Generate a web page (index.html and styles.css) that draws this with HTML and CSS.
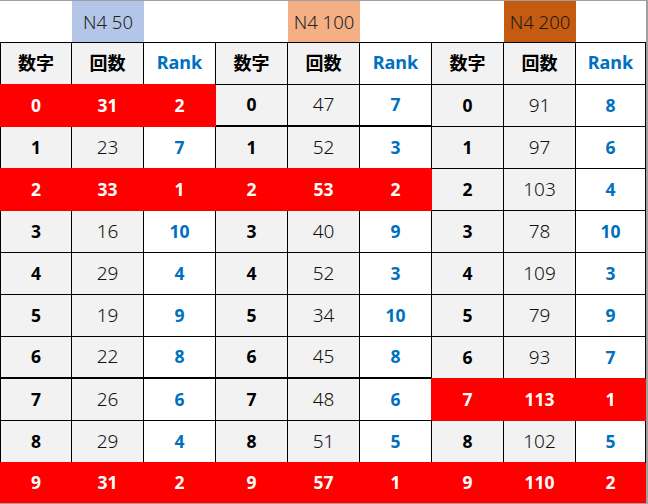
FILE: index.html
```html
<!DOCTYPE html>
<html lang="ja">
<head>
<meta charset="utf-8">
<title>N4</title>
<link rel="stylesheet" href="styles.css">
</head>
<body>
<div class="sheet">
  <div class="t"></div><div class="t blue">N4 50</div><div class="t"></div>
  <div class="t"></div><div class="t salmon">N4 100</div><div class="t"></div>
  <div class="t"></div><div class="t brown">N4 200</div><div class="t"></div>

  <div class="c h first g jp">数字</div><div class="c h g jp">回数</div><div class="c h rank">Rank</div>
  <div class="c h g jp">数字</div><div class="c h g jp">回数</div><div class="c h rank">Rank</div>
  <div class="c h g jp">数字</div><div class="c h g jp">回数</div><div class="c h rank last">Rank</div>

  <div class="c first g d red">0</div><div class="c g n red">31</div><div class="c r red">2</div>
  <div class="c g d thick">0</div><div class="c g n thick">47</div><div class="c r thick">7</div>
  <div class="c g d">0</div><div class="c g n">91</div><div class="c r last">8</div>

  <div class="c first g d">1</div><div class="c g n">23</div><div class="c r">7</div>
  <div class="c g d">1</div><div class="c g n">52</div><div class="c r">3</div>
  <div class="c g d">1</div><div class="c g n">97</div><div class="c r last">6</div>

  <div class="c first g d red">2</div><div class="c g n red">33</div><div class="c r red">1</div>
  <div class="c g d red">2</div><div class="c g n red">53</div><div class="c r red">2</div>
  <div class="c g d">2</div><div class="c g n">103</div><div class="c r last">4</div>

  <div class="c first g d">3</div><div class="c g n">16</div><div class="c r">10</div>
  <div class="c g d">3</div><div class="c g n">40</div><div class="c r">9</div>
  <div class="c g d">3</div><div class="c g n">78</div><div class="c r last">10</div>

  <div class="c first g d">4</div><div class="c g n">29</div><div class="c r">4</div>
  <div class="c g d">4</div><div class="c g n">52</div><div class="c r">3</div>
  <div class="c g d">4</div><div class="c g n">109</div><div class="c r last">3</div>

  <div class="c first g d">5</div><div class="c g n">19</div><div class="c r">9</div>
  <div class="c g d">5</div><div class="c g n">34</div><div class="c r">10</div>
  <div class="c g d">5</div><div class="c g n">79</div><div class="c r last">9</div>

  <div class="c first g d thick">6</div><div class="c g n thick">22</div><div class="c r thick">8</div>
  <div class="c g d thick">6</div><div class="c g n thick">45</div><div class="c r thick">8</div>
  <div class="c g d">6</div><div class="c g n">93</div><div class="c r last">7</div>

  <div class="c first g d">7</div><div class="c g n">26</div><div class="c r">6</div>
  <div class="c g d">7</div><div class="c g n">48</div><div class="c r">6</div>
  <div class="c g d red">7</div><div class="c g n red">113</div><div class="c r last red">1</div>

  <div class="c first g d">8</div><div class="c g n">29</div><div class="c r">4</div>
  <div class="c g d">8</div><div class="c g n">51</div><div class="c r">5</div>
  <div class="c g d">8</div><div class="c g n">102</div><div class="c r last">5</div>

  <div class="c first g d red">9</div><div class="c g n red">31</div><div class="c r red">2</div>
  <div class="c g d red">9</div><div class="c g n red">57</div><div class="c r red">1</div>
  <div class="c g d red">9</div><div class="c g n red">110</div><div class="c r last red">2</div>
</div>
</body>
</html>
```

FILE: styles.css
```css
html, body {
  margin: 0;
  padding: 0;
  background: #ffffff;
  overflow: hidden;
}

.sheet {
  width: 646px;
  height: 502px;
  border-top: 1px solid #a0a0a0;
  border-right: 2px solid #a0a0a0;
  border-bottom: 1px solid #a0a0a0;
  display: grid;
  grid-template-columns: repeat(8, 72px) 70px;
  grid-template-rows: 41px 43px repeat(9, 42px) 40px;
  font-family: "Noto Sans", "Noto Sans CJK JP", sans-serif;
  font-size: 17px;
  color: #000;
}

.t {
  display: flex;
  align-items: center;
  justify-content: center;
  font-weight: 300;
  color: #1f1f1f;
  font-size: 18.5px;
  padding-bottom: 1px;
}

.blue { background: #b4c6e7; }
.salmon { background: #f4b084; }
.brown { background: #c55a11; color: #1a1a1a; }

.c {
  box-sizing: border-box;
  display: flex;
  align-items: center;
  justify-content: center;
  border-right: 1px solid #000;
  border-bottom: 1px solid #000;
  background: #ffffff;
  padding-bottom: 2px;
}

.c.h { border-top: 1px solid #000; padding-bottom: 3px; }
.c.first { border-left: 1px solid #000; }
.c.last { border-right: 1px solid #000; }

.g { background: #f2f2f2; }

.jp {
  font-family: "Noto Sans CJK JP", sans-serif;
  font-weight: 700;
  font-size: 18px;
}

.rank {
  font-weight: 700;
  color: #0070c0;
  font-size: 18px;
}

.d { font-weight: 700; font-size: 17.5px; }
.n { font-weight: 300; color: #111; font-size: 19px; }
.r { font-weight: 700; color: #0070c0; font-size: 17.5px; }

.thick { border-bottom-width: 2px; }

.c.red {
  background: #ff0000;
  color: #ffffff;
  font-weight: 700;
  font-size: 17.5px;
  border-color: #ff0000;
  box-shadow: -1px -1px 0 0 #ff0000;
}
```
